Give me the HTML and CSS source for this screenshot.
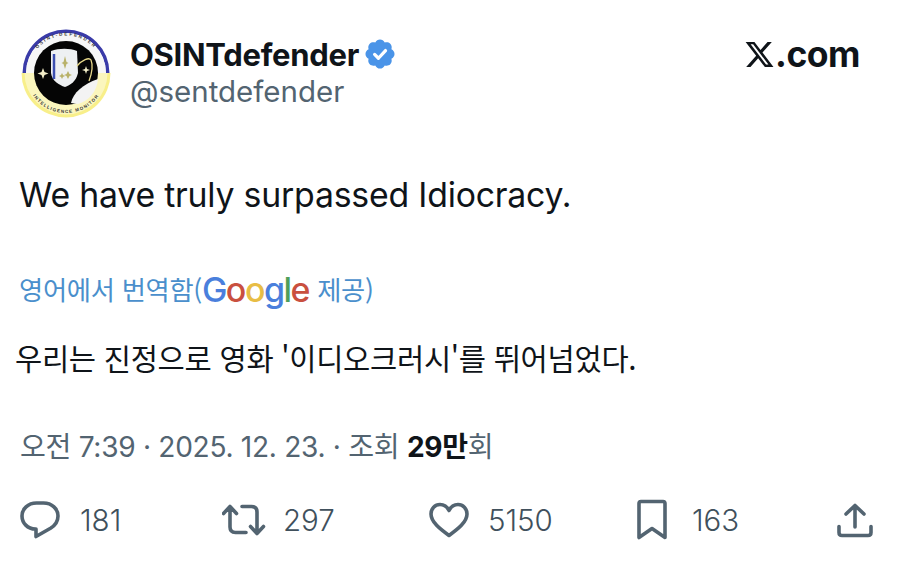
FILE: index.html
```html
<!DOCTYPE html>
<html lang="ko">
<head>
<meta charset="utf-8">
<title>OSINTdefender</title>
<link rel="stylesheet" href="styles.css">
</head>
<body>
<main class="tweet">
  <header class="head">
    <svg class="avatar" viewBox="0 0 90 90" aria-hidden="true">
      <defs>
        <path id="arcTop" d="M7.500 45a37.500 37.500 0 0 1 75 0"/>
        <path id="arcBot" d="M5 45a40 40 0 0 0 80 0"/>
      </defs>
      <path d="M1.500 45a43.500 43.500 0 0 1 87 0h-3.500a40 40 0 0 0-80 0z" fill="#3a3ba8"/>
      <path d="M0.500 45a44.500 44.500 0 0 0 89 0z" fill="#f8ef8a"/>
      <path d="M3.500 45a41.500 41.500 0 0 0 83 0z" fill="#fbf6bd"/>
      <path d="M5 45a40 40 0 0 1 80 0z" fill="#f7f7f7"/>
      <circle cx="45" cy="45" r="32" fill="#050505"/>
      <text class="ring-text ring-top"><textPath href="#arcTop" startOffset="50%" text-anchor="middle">OSINT-DEFENDER</textPath></text>
      <text class="ring-text"><textPath href="#arcBot" startOffset="50%" text-anchor="middle">INTELLIGENCE MONITOR</textPath></text>
      <path d="M30 23c8-3 19-3 26 0l1 22c-2 9-8 12-13 14-6-2-13-6-14-14z" fill="#eef0f2"/>
      <path d="M33 26v25" stroke="#3c4fb0" stroke-width="2.500"/>
      <path d="M44 28l1.500 6 2 1-2 1-1.500 5-1.500-5-2-1 2-1zM47 43l1.500 3 2.500 1-2.500 1-1.500 3-1.500-3-2.500-1 2.500-1zM41 45l1 2 2 1-2 1-1 2-1-2-2-1 2-1z" fill="#b9b26a"/>
      <path d="M56 38c5-6 12-9 14-6 2 5 1 13-2 21" fill="none" stroke="#e8d98a" stroke-width="1.300"/>
      <path d="M22 40l1.500 4 4 1.500-4 1.500-1.500 4-1.500-4-4-1.500 4-1.500z" fill="#f2edc8"/>
      <path d="M65 38l1 3 3 1-3 1-1 3-1-3-3-1 3-1z" fill="#f2edc8"/>
      <path d="M50 75c2-10 12-19 27-24-1 12-9 22-20 25z" fill="#f3f3f3"/>
    </svg>
    <div class="who">
      <div class="name-row">
        <span class="name">OSINTdefender</span>
        <svg class="badge" viewBox="0 0 24 24" aria-hidden="true">
          <path fill="#4a94e8" d="M22.250 12c0-1.430-.880-2.670-2.190-3.340.460-1.390.200-2.900-.810-3.910s-2.520-1.270-3.910-.810c-.660-1.310-1.910-2.190-3.340-2.190s-2.670.880-3.330 2.190c-1.400-.460-2.910-.200-3.920.810s-1.260 2.520-.800 3.910C2.630 9.330 1.750 10.570 1.750 12s.880 2.670 2.200 3.340c-.460 1.390-.210 2.900.800 3.910s2.520 1.260 3.910.810c.670 1.310 1.910 2.190 3.340 2.190s2.680-.880 3.340-2.190c1.390.450 2.900.200 3.910-.810s1.270-2.520.810-3.910c1.310-.670 2.190-1.910 2.190-3.340z"/>
          <path fill="none" stroke="#fff" stroke-width="2.300" stroke-linecap="round" stroke-linejoin="round" d="M8.200 12.300l2.700 2.700 5-5.400"/>
        </svg>
      </div>
      <div class="handle">@sentdefender</div>
    </div>
    <div class="brand">
      <svg class="x-logo" viewBox="0 0 24 24" aria-hidden="true">
        <path d="M18.240 2.250h3.310l-7.230 8.260 8.500 11.240H16.170l-5.210-6.820L5 21.750H1.680l7.730-8.840L1.250 2.250H8.080l4.710 6.230zm-1.160 17.520h1.830L7.080 4.130H5.120z" fill="#0f1419"/>
      </svg><span class="dotcom">.com</span>
    </div>
  </header>

  <p class="text">We have truly surpassed Idiocracy.</p>

  <p class="translated">영어에서 번역함(<span class="google"><span class="g-blue">G</span><span class="g-red">o</span><span class="g-yellow">o</span><span class="g-blue">g</span><span class="g-green">l</span><span class="g-red">e</span></span> 제공)</p>

  <p class="korean">우리는 진정으로 영화 '이디오크러시'를 뛰어넘었다.</p>

  <p class="meta">오전 7:39 · 2025. 12. 23. · 조회 <strong>29만</strong>회</p>

  <footer class="actions">
    <div class="action action-reply">
      <svg class="icon" viewBox="0 0 40 38" aria-hidden="true"><path d="M16.500 2h7c8.500 0 14.500 6 14.500 13 0 5.500-3 9.500-7.500 12.300L16 35.500V28h-.500C7.500 28 2 22 2 15S8 2 16.500 2z"/></svg>
      <span>181</span>
    </div>
    <div class="action action-rt">
      <svg class="icon" viewBox="0 0 46 34" aria-hidden="true"><path d="M1.500 10.500L8 3.500l6.500 7M8 4v20c0 3.500 2 5.500 5.500 5.500H24M20 3.500h9.500c3.500 0 5.500 2 5.500 5.500v21M28.500 23.500L35 30.500l6.500-7"/></svg>
      <span>297</span>
    </div>
    <div class="action action-like">
      <svg class="icon" viewBox="0 0 40 36" aria-hidden="true"><path d="M20 33.500C11 27 2 20 2 12 2 6.500 6 2.500 11 2.500c4 0 7 2 9 6 2-4 5-6 9-6 5 0 9 4 9 9.500 0 8-9 15-18 21.500z"/></svg>
      <span>5150</span>
    </div>
    <div class="action action-mark">
      <svg class="icon" viewBox="0 0 32 42" aria-hidden="true"><path d="M3 38.500V4.500c0-1.200.800-2 2-2h22c1.200 0 2 .800 2 2v34L16 29.500z"/></svg>
      <span>163</span>
    </div>
    <div class="action action-share">
      <svg class="icon" viewBox="0 0 36 36" aria-hidden="true"><path d="M18 25V3.500M9 12l9-8.500 9 8.500M2 24.500v6c0 2 1 3 3 3h26c2 0 3-1 3-3v-6"/></svg>
    </div>
  </footer>
</main>
</body>
</html>
```

FILE: styles.css
```css
html, body {
  margin: 0;
  padding: 0;
  background: #fff;
}

body {
  width: 900px;
  height: 568px;
  overflow: hidden;
  color: #0f1419;
  font-family: Inter, "Noto Sans CJK KR", sans-serif;
}

.tweet {
  display: flex;
  flex-direction: column;
  height: 568px;
  box-sizing: border-box;
  padding: 28px 40px 0 20px;
}

.head {
  display: flex;
  align-items: flex-start;
  height: 90px;
}

.avatar {
  width: 92px;
  height: 90px;
  flex: none;
}

.ring-text {
  font-family: "Liberation Sans", sans-serif;
  font-size: 4.500px;
  font-weight: 700;
  letter-spacing: 1.100px;
  fill: #333;
}

.ring-top {
  letter-spacing: 1.800px;
}

.who {
  display: flex;
  flex-direction: column;
  margin-left: 18px;
  flex: 1;
}

.name-row {
  display: flex;
  align-items: center;
  gap: 4px;
  height: 52px;
}

.name {
  font-size: 31px;
  font-weight: 700;
  letter-spacing: -0.300px;
}

.badge {
  width: 34px;
  height: 34px;
}

.handle {
  margin-top: -7px;
  font-size: 29.500px;
  line-height: 36px;
  color: #536471;
}

.brand {
  display: flex;
  align-items: center;
  height: 52px;
}

.x-logo {
  width: 31px;
  height: 31px;
}

.dotcom {
  font-size: 35.500px;
  font-weight: 700;
  letter-spacing: -0.500px;
}

p {
  margin: 0;
}

.text {
  margin-top: 55px;
  margin-left: -1px;
  font-size: 33.800px;
  line-height: 44px;
  letter-spacing: -0.200px;
}

.translated {
  margin-top: 54px;
  margin-left: -1px;
  font-family: "Noto Sans CJK KR", sans-serif;
  font-size: 26.300px;
  line-height: 36px;
  color: #4a8fcc;
  letter-spacing: -0.300px;
}

.google {
  font-family: Inter, sans-serif;
  font-size: 34px;
  font-weight: 500;
  letter-spacing: -1.500px;
  line-height: 30px;
  vertical-align: -2px;
  margin-right: 1px;
}

.g-blue { color: #4a7fdc; }
.g-red { color: #c9503f; }
.g-yellow { color: #e8bd45; }
.g-green { color: #4f9f5a; }

.korean {
  margin-top: 31px;
  margin-left: -5px;
  font-family: "Noto Sans CJK KR", sans-serif;
  font-size: 29.600px;
  line-height: 40px;
  letter-spacing: -0.300px;
}

.meta {
  margin-top: 49px;
  font-size: 28.100px;
  line-height: 40px;
  letter-spacing: -0.300px;
  color: #536471;
}

.meta strong {
  font-weight: 700;
  color: #0f1419;
}

.actions {
  display: flex;
  align-items: center;
  margin-top: 33px;
  height: 40px;
}

.action {
  display: flex;
  flex: none;
  align-items: center;
  font-size: 29.500px;
  font-weight: 300;
  color: #40505c;
}

.icon {
  flex: none;
  fill: none;
  stroke: #536471;
  stroke-width: 3.600;
  stroke-linejoin: round;
  stroke-linecap: round;
}

.action-reply { width: 202px; gap: 20px; }
.action-reply .icon { width: 40px; height: 38px; }

.action-rt { width: 207px; gap: 15px; }
.action-rt .icon { width: 46px; height: 34px; }

.action-like { width: 207px; gap: 19px; }
.action-like .icon { width: 40px; height: 36px; }

.action-mark { width: 201px; gap: 24px; }
.action-mark .icon { width: 32px; height: 42px; }

.action-share .icon { width: 36px; height: 36px; }
```
